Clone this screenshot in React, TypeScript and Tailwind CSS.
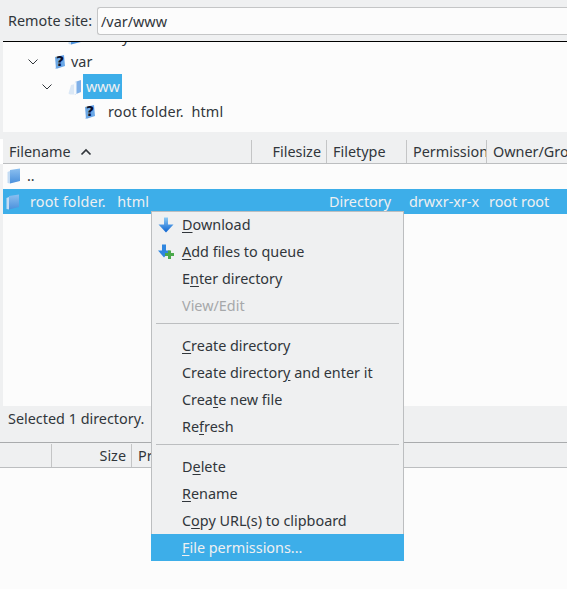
const FONT = "font-['Noto_Sans',sans-serif]";

function FolderIcon({ className = '' }: { className?: string }) {
    return (
        <svg viewBox="0 0 14 16" className={`w-[14px] h-[16px] ${className}`}>
            <defs>
                <linearGradient id="fold" x1="0" y1="0" x2="0" y2="1">
                    <stop offset="0" stopColor="#8cc0f0" />
                    <stop offset="1" stopColor="#4a90dc" />
                </linearGradient>
            </defs>
            <path d="M0.5 4 L3 3 L3 15.5 L0.5 15 Z" fill="#c4dcf4" />
            <path d="M3 2 L13 0.5 L13 13 L3 15.5 Z" fill="url(#fold)" />
        </svg>
    );
}

function OpenFolderIcon() {
    return (
        <svg viewBox="0 0 14 16" className="w-[14px] h-[16px]">
            <path d="M0.5 14.5 L3 6 L7 5 L7 15.5 L2 15.5 Z" fill="#dbe8f6" />
            <path d="M7 3 L13 1 L13 13 L7 15.5 Z" fill="#7fb0e8" />
            <path d="M6 4 L8.5 2.5 L8.5 15 L6 15.5 Z" fill="#f4f8fc" />
        </svg>
    );
}

function UnknownIcon() {
    return (
        <svg viewBox="0 0 12 16" className="w-[12px] h-[16px]">
            <path d="M1 3 L10 1 L11 12 L2 15 Z" fill="#6ba7e6" />
            <path d="M1 13 L3 15 L1 15 Z" fill="#cfe2f6" />
            <text x="6" y="12" textAnchor="middle" fontSize="14" fontWeight="800" fontFamily="'DejaVu Sans',sans-serif" fill="#0a0f2a">?</text>
        </svg>
    );
}

function SortArrow() {
    return (
        <svg viewBox="0 0 12 8" className="w-3 h-2">
            <path d="M1.5 6.5 L6 2 L10.5 6.5" fill="none" stroke="#31363b" strokeWidth="1.7" />
        </svg>
    );
}

function TreeRow({ indent, chevron, icon, children }: { indent: number; chevron?: boolean; icon: React.ReactNode; children: React.ReactNode }) {
    return (
        <div className="flex items-center h-[25px]" style={{ paddingLeft: indent }}>
            <span className="w-[16px] flex justify-center">
                {chevron && (
                    <svg viewBox="0 0 12 8" className="w-3 h-2 rotate-180">
                        <path d="M1.5 6.5 L6 2 L10.5 6.5" fill="none" stroke="#31363b" strokeWidth="1" />
                    </svg>
                )}
            </span>
            {icon}
            {children}
        </div>
    );
}

function DownloadIcon() {
    return (
        <svg viewBox="0 0 16 16" className="w-4 h-4">
            <defs>
                <linearGradient id="dl" x1="0" y1="0" x2="0" y2="1">
                    <stop offset="0" stopColor="#8ccaf6" />
                    <stop offset="1" stopColor="#0a62d0" />
                </linearGradient>
            </defs>
            <path d="M6 0.5 H10 V7.5 H15.5 L8 15.5 L0.5 7.5 H6 Z" fill="url(#dl)" />
        </svg>
    );
}

function QueueIcon() {
    return (
        <svg viewBox="0 0 16 16" className="w-4 h-4">
            <path d="M4 0.5 H8 V6.5 H12 L6 13.5 L0 6.5 H4 Z" fill="#2f86e0" />
            <path d="M10 6.5 H13 V9 H16 V12 H13 V15 H10 V12 H7 V9 H10 Z" fill="#4aa84a" />
        </svg>
    );
}

type Item = { before: string; key: string; after: string; icon?: React.ReactNode; disabled?: boolean; active?: boolean };

function Row({ item }: { item: Item }) {
    const color = item.active ? '-mx-px -mt-px bg-[#3daee9] text-[#eff0f1]' : item.disabled ? 'pb-[2px] text-[#a6a8aa]' : 'pb-[2px] text-[#31363b]';
    return (
        <div className={`flex items-center h-[27px] ${color}`}>
            <span className={`flex justify-end pr-[8px] ${item.active ? 'w-[31px]' : 'w-[30px]'}`}>{item.icon}</span>
            <span className="whitespace-pre">
                {item.before}
                {item.key && <span className="underline underline-offset-[2px]">{item.key}</span>}
                {item.after}
            </span>
        </div>
    );
}

function Separator() {
    return (
        <div className="pt-[3px] pb-[9px] px-[4px]">
            <div className="h-px bg-[#bcbec0]" />
        </div>
    );
}

const groupA: Item[] = [
    { before: '', key: 'D', after: 'ownload', icon: <DownloadIcon /> },
    { before: '', key: 'A', after: 'dd files to queue', icon: <QueueIcon /> },
    { before: 'E', key: 'n', after: 'ter directory' },
    { before: 'View/Edit', key: '', after: '', disabled: true },
];
const groupB: Item[] = [
    { before: '', key: 'C', after: 'reate directory' },
    { before: 'Create director', key: 'y', after: ' and enter it' },
    { before: 'Crea', key: 't', after: 'e new file' },
    { before: 'Re', key: 'f', after: 'resh' },
];
const groupC: Item[] = [
    { before: 'D', key: 'e', after: 'lete' },
    { before: '', key: 'R', after: 'ename' },
    { before: 'C', key: 'o', after: 'py URL(s) to clipboard' },
    { before: '', key: 'F', after: 'ile permissions...', active: true },
];

export default function App() {
    return (
        <div className={`${FONT} relative w-[567px] h-[612px] overflow-hidden bg-white text-[14.4px] text-[#31363b] flex flex-col`}>
            {/* remote site bar */}
            <div className="h-[41px] bg-[#eff0f1] flex items-start pt-[7px] pl-[8px] shrink-0">
                <span className="w-[89px] h-[28px] leading-[27px]">Remote site:</span>
                <div className="flex-1 h-[28px] bg-[#fcfcfc] border border-r-0 border-[#c4c5c6] rounded-l-[3px] pl-[3px] leading-[27px]">/var/www</div>
            </div>

            {/* remote tree */}
            <div className="h-[98px] shrink-0 bg-[#eff0f1] pl-[3px] overflow-hidden">
                <div className="h-[91px] bg-[#fcfcfc] border-t border-black overflow-hidden">
                    <div className="-mt-[18px]">
                        <TreeRow indent={48} icon={<span className="mr-[4px] ml-[1px]"><FolderIcon /></span>}>
                            <span>library</span>
                        </TreeRow>
                        <TreeRow indent={22} chevron icon={<span className="ml-[13px] mr-[5px]"><UnknownIcon /></span>}>
                            <span>var</span>
                        </TreeRow>
                        <TreeRow indent={36} chevron icon={<span className="ml-[13px] mr-px"><OpenFolderIcon /></span>}>
                            <span className="bg-[#3daee9] text-[#eff0f1] h-[25px] leading-[25px] px-[3px] w-[39px]">www</span>
                        </TreeRow>
                        <TreeRow indent={64} icon={<span className="ml-[1px] mr-[12px]"><UnknownIcon /></span>}>
                            <span className="whitespace-pre tracking-[0.15px]">root folder.  html</span>
                        </TreeRow>
                    </div>
                </div>
            </div>

            {/* file list header */}
            <div className="h-[25px] shrink-0 ml-[3px] pt-px bg-[#eff0f1] border-b border-[#bcbec0] flex">
                <div className="w-[249px] pl-[6px] flex items-center border-r border-[#c4c5c6]">
                    <span>Filename</span>
                    <span className="ml-[9px]"><SortArrow /></span>
                </div>
                <div className="w-[75px] pr-[5px] flex items-center justify-end border-r border-[#c4c5c6]">Filesize</div>
                <div className="w-[80px] pl-[6px] flex items-center border-r border-[#c4c5c6]">Filetype</div>
                <div className="w-[80px] pl-[6px] flex items-center border-r border-[#c4c5c6] overflow-hidden whitespace-nowrap">Permissions</div>
                <div className="flex-1 pl-[6px] flex items-center overflow-hidden whitespace-nowrap">Owner/Group</div>
            </div>

            {/* file list */}
            <div className="h-[242px] shrink-0 bg-[#eff0f1] pl-[3px]">
                <div className="h-full bg-[#fcfcfc]">
                    <div className="h-[25px] flex items-center pl-[4px] pb-[2px]">
                        <FolderIcon />
                        <span className="ml-[6px]">..</span>
                    </div>
                    <div className="h-[25px] flex items-center pl-[3px] bg-[#3daee9] text-[#eff0f1]">
                        <FolderIcon />
                        <span className="ml-[10px] w-[299px] whitespace-pre tracking-[0.15px]">root folder.   html</span>
                        <span className="w-[80px]">Directory</span>
                        <span className="w-[80px]">drwxr-xr-x</span>
                        <span>root root</span>
                    </div>
                </div>
            </div>

            {/* status */}
            <div className="h-[36px] shrink-0 bg-[#eff0f1] pl-[8px] leading-[26px]">Selected 1 directory.</div>

            {/* queue header */}
            <div className="h-[26px] shrink-0 pt-px bg-[#eff0f1] border-t border-t-[#a9abad] border-b border-b-[#bcbec0] flex">
                <div className="w-[52px] border-r border-[#c4c5c6]" />
                <div className="w-[80px] pr-[5px] flex items-center justify-end border-r border-[#c4c5c6]">Size</div>
                <div className="pl-[6px] flex items-center">Priority</div>
            </div>

            {/* queue body */}
            <div className="h-[121px] shrink-0 bg-[#fcfcfc]" />

            {/* context menu */}
            <div className="absolute left-[151px] top-[211px] w-[253px] h-[350px] bg-[#eff0f1] border border-[#bcbec0] border-b-0">
                {groupA.map((item) => <Row key={item.before + item.after} item={item} />)}
                <Separator />
                {groupB.map((item) => <Row key={item.before + item.after} item={item} />)}
                <Separator />
                {groupC.map((item) => <Row key={item.before + item.after} item={item} />)}
            </div>
        </div>
    );
}
